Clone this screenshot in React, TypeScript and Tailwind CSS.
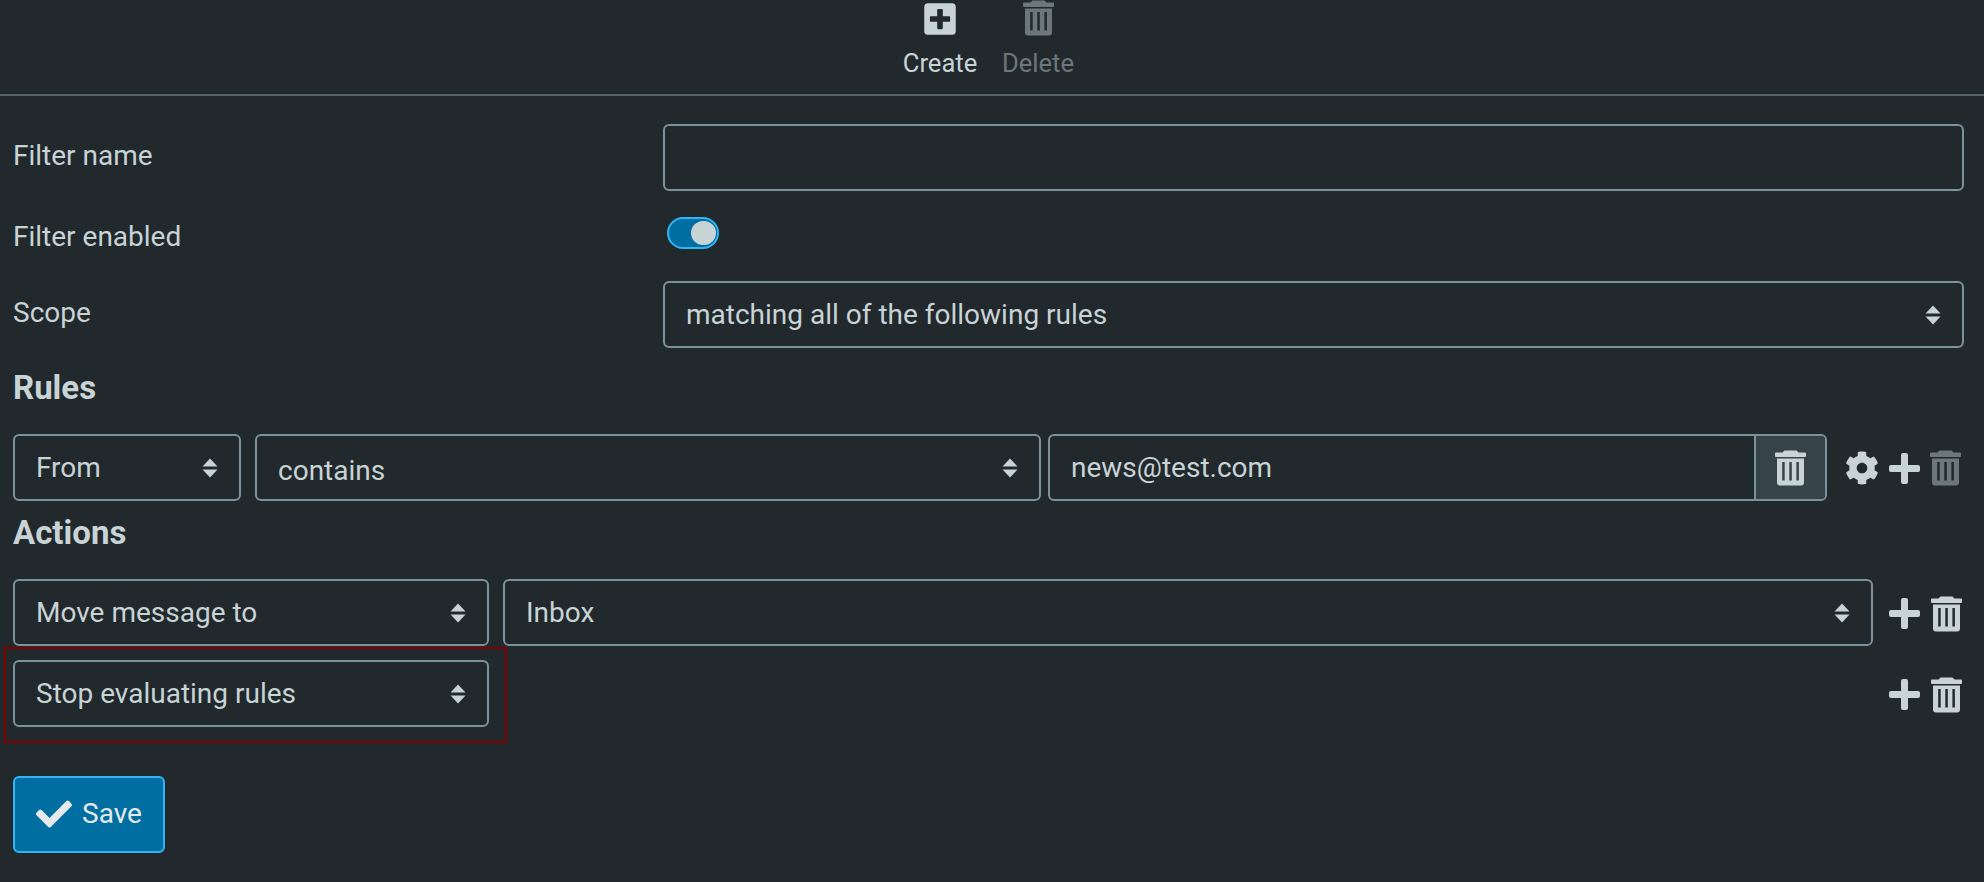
import type { ReactNode } from "react";
import { FaCheck, FaCog, FaPlusSquare } from "react-icons/fa";

function SortIcon() {
  return (
    <svg viewBox="0 0 16 20" className="h-[20px] w-[16px] text-[#c8d3d6]" fill="currentColor">
      <path d="M8 0.5 15.5 8.5H0.5Z" />
      <path d="M0.5 11.5H15.5L8 19.5Z" />
    </svg>
  );
}

function TrashIcon({ className }: { className: string }) {
  return (
    <svg viewBox="0 0 31 36" className={`h-[36px] w-[31px] shrink-0 ${className}`} fill="currentColor">
      <path d="M9.5 0.5H21.5L23.5 2.5H30a1 1 0 0 1 1 1V6a1 1 0 0 1-1 1H1A1 1 0 0 1 0 6V3.5a1 1 0 0 1 1-1H7.5Z" />
      <path
        fillRule="evenodd"
        d="M2 8.5H29V32.5a3 3 0 0 1-3 3H5a3 3 0 0 1-3-3ZM7.2 12V30.5H9.7V12ZM14.3 12V30.5H16.8V12ZM21.4 12V30.5H23.9V12Z"
      />
    </svg>
  );
}

function PlusIcon() {
  return (
    <svg viewBox="0 0 31 31" className="h-[31px] w-[31px] shrink-0 text-[#c8d3d6]" fill="currentColor">
      <path d="M14 0h3a2 2 0 0 1 2 2V12h10a2 2 0 0 1 2 2v3a2 2 0 0 1-2 2H19V29a2 2 0 0 1-2 2H14a2 2 0 0 1-2-2V19H2a2 2 0 0 1-2-2V14a2 2 0 0 1 2-2H12V2a2 2 0 0 1 2-2Z" />
    </svg>
  );
}

function Select({ className, textClass, children }: { className: string; textClass?: string; children: ReactNode }) {
  return (
    <div className={`flex h-[67px] items-center justify-between rounded-[6px] border-2 border-[#7b929a] pl-[21px] pr-[21px] ${className}`}>
      <span className={textClass}>{children}</span>
      <SortIcon />
    </div>
  );
}

function RowIcons() {
  return (
    <div className="ml-auto flex items-center pr-[2px] pt-[2px]">
      <PlusIcon />
      <div className="w-[11px]" />
      <TrashIcon className="text-[#c8d3d6]" />
    </div>
  );
}

export default function App() {
  return (
    <div className="h-[882px] overflow-hidden bg-[#21292d] font-['Roboto',sans-serif] text-[28px] text-[#c8d3d6]">
      <div className="flex h-[94px] justify-center pr-[6px]">
        <div className="flex w-[98px] flex-col items-center">
          <FaPlusSquare className="mt-[1px] h-[36px] w-[32px] text-[#c8d3d6]" />
          <span className="mt-[8px] text-[25.6px] leading-[36px]">Create</span>
        </div>
        <div className="flex w-[98px] flex-col items-center text-[#6c777b]">
          <TrashIcon className="text-[#6c777b]" />
          <span className="mt-[9px] text-[25.6px] leading-[36px]">Delete</span>
        </div>
      </div>
      <div className="h-[2px] bg-[#566469]" />

      <div className="pl-[13px] pr-[20px] pt-[28px]">
        <div className="flex">
          <label className="w-[650px] pt-[14px] leading-[36px]">Filter name</label>
          <div className="h-[67px] flex-1 rounded-[6px] border-2 border-[#7b929a]" />
        </div>

        <div className="mt-[26px] flex h-[32px]">
          <label className="w-[650px] pt-[2px] leading-[36px]">Filter enabled</label>
          <div className="ml-[4px] flex h-[32px] w-[52px] items-center justify-end rounded-full border-2 border-[#2fb5f5] bg-[#006ea0] pr-[1px]">
            <div className="h-[24px] w-[25px] rounded-full bg-[#c8d3d6]" />
          </div>
        </div>

        <div className="mt-[32px] flex">
          <label className="w-[650px] pt-[14px] leading-[36px]">Scope</label>
          <Select className="flex-1">matching all of the following rules</Select>
        </div>

        <h3 className="mt-[20px] text-[33px] font-bold leading-[40px]">Rules</h3>
        <div className="mt-[26px] flex items-center">
          <Select className="w-[228px]">From</Select>
          <Select className="ml-[14px] w-[786px]" textClass="pt-[7px]">contains</Select>
          <div className="ml-[7px] flex h-[67px] w-[779px] rounded-[6px] border-2 border-[#7b929a]">
            <div className="flex flex-1 items-center pl-[21px]">news@test.com</div>
            <div className="flex w-[71px] items-center justify-center rounded-r-[4px] border-l-2 border-[#7b929a] bg-[#364349]">
              <TrashIcon className="text-[#c8d3d6]" />
            </div>
          </div>
          <FaCog className="ml-[18px] mt-[1px] h-[34px] w-[34px] text-[#c8d3d6]" />
          <div className="ml-[10px] mt-[1px]"><PlusIcon /></div>
          <div className="ml-[10px] mt-[1px]"><TrashIcon className="text-[#6c777b]" /></div>
        </div>

        <h3 className="mt-[12px] text-[33px] font-bold leading-[40px]">Actions</h3>
        <div className="mt-[26px] flex items-center">
          <Select className="w-[476px]" textClass="pt-[1px]">Move message to</Select>
          <Select className="ml-[14px] w-[1370px]" textClass="pt-[1px]">Inbox</Select>
          <RowIcons />
        </div>
        <div className="relative mt-[14px] flex items-center">
          <Select className="w-[476px]" textClass="pt-[1px]">Stop evaluating rules</Select>
          <RowIcons />
          <div className="pointer-events-none absolute left-[-9px] top-[-13px] h-[96px] w-[503px] border-2 border-[#800000]" />
        </div>

        <button className="mt-[49px] flex h-[77px] w-[152px] items-center rounded-[6px] border-2 border-[#2fb5f5] bg-[#006ea0] pb-[2px] pl-[21px] text-[#e4eaec]">
          <FaCheck className="h-[36px] w-[36px]" />
          <span className="ml-[10px]">Save</span>
        </button>
      </div>
    </div>
  );
}
